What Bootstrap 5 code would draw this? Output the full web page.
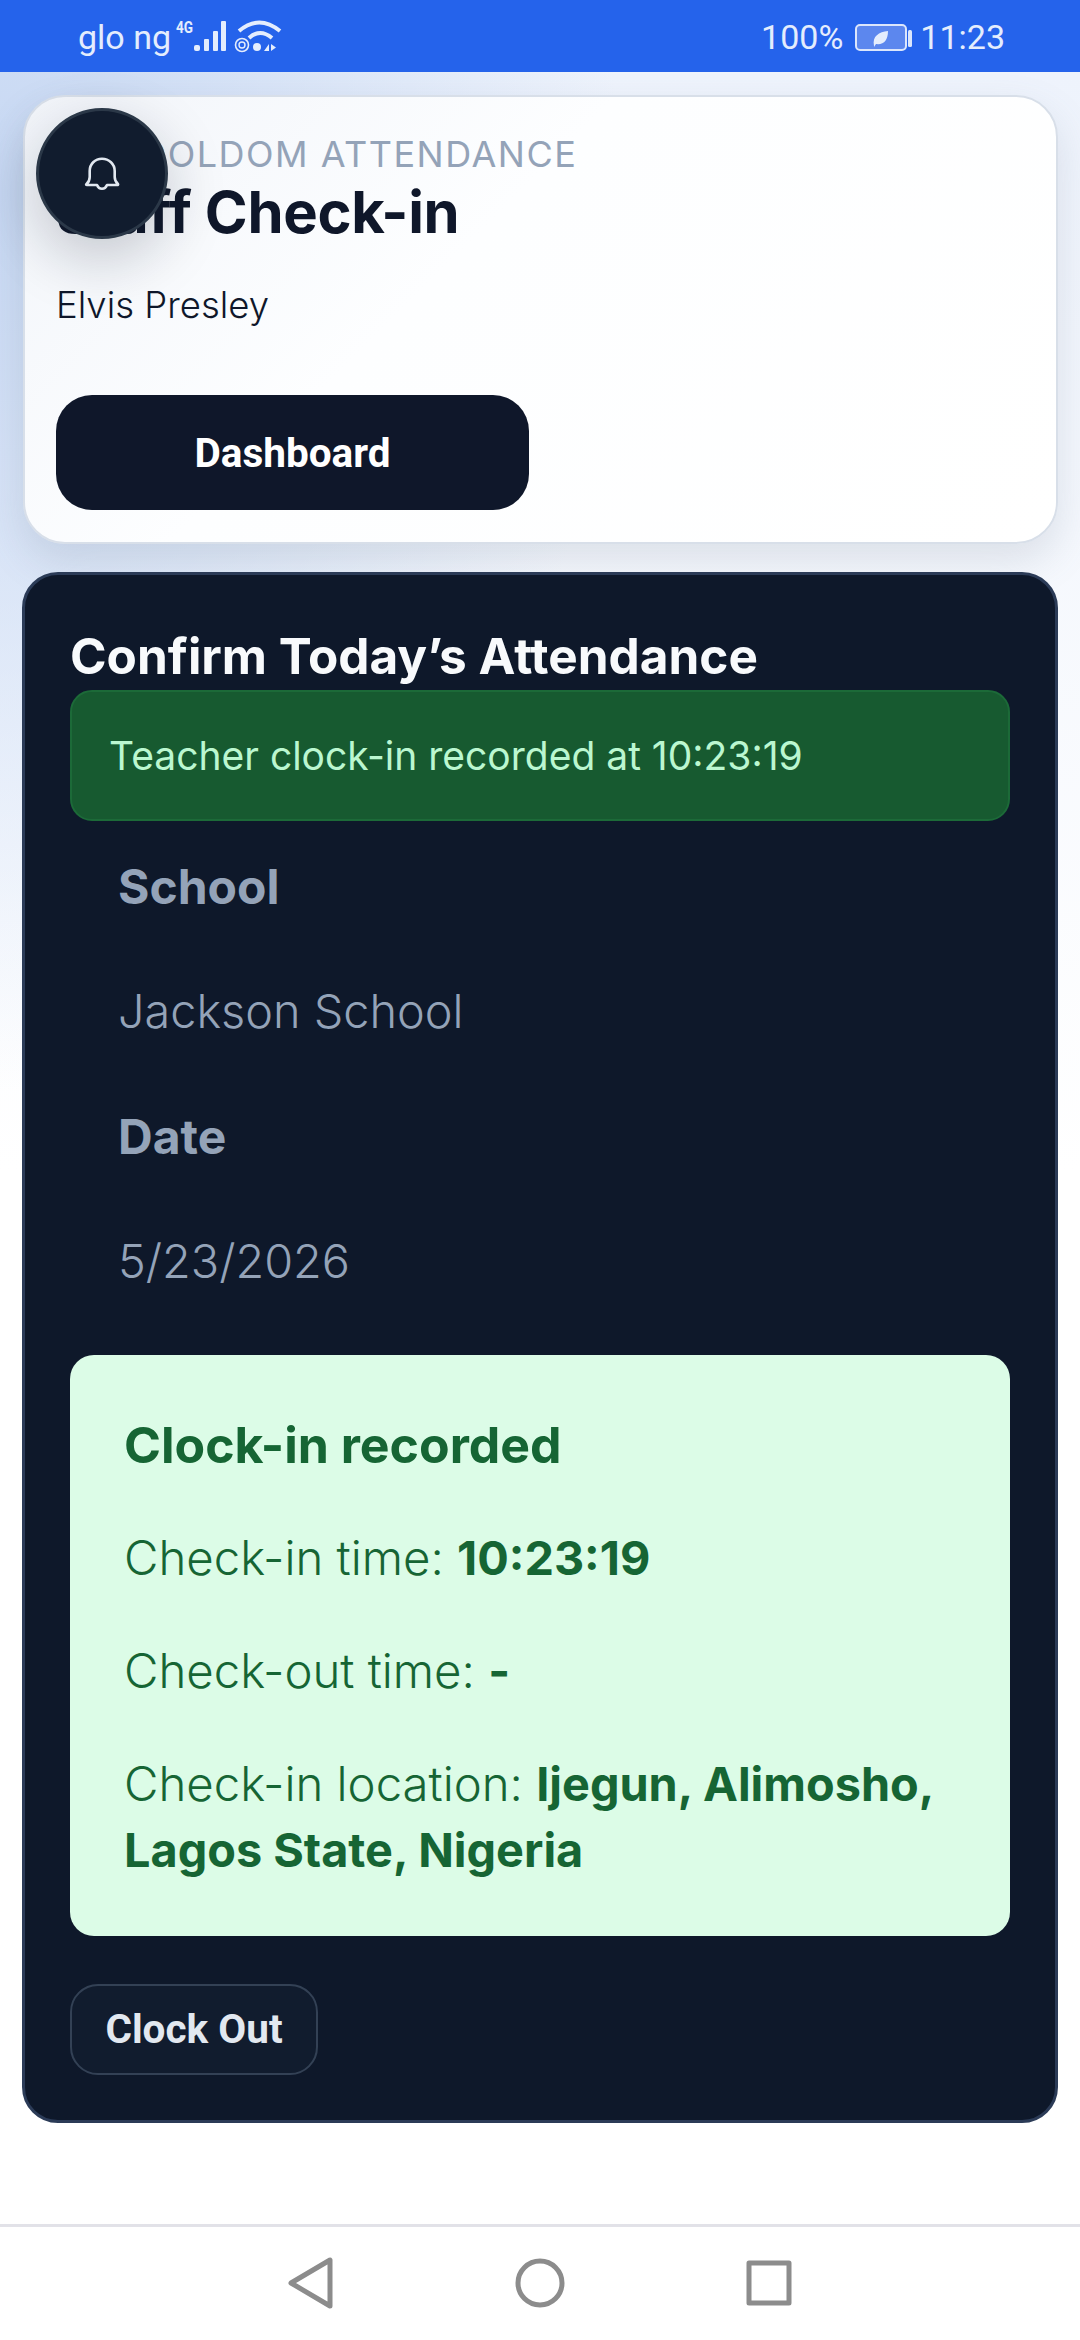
<!DOCTYPE html>
<html lang="en">
<head>
    <meta charset="UTF-8">
    <meta name="viewport" content="width=device-width, initial-scale=1.0">
    <title>Staff Check-in</title>
    <link href="https://cdn.jsdelivr.net/npm/bootstrap@5.3.0/dist/css/bootstrap.min.css" rel="stylesheet">
    <style>
        body {
            width: 1080px;
            height: 2340px;
            overflow: hidden;
            font-family: Inter, "Noto Sans", sans-serif;
            background: #fff;
        }

        #statusBar {
            height: 72px;
            padding: 3px 75px 0 78px;
            background: #2563eb;
            color: #e4edfd;
            font-family: Roboto, sans-serif;
            font-size: 34px;
        }

        #signalIcon { margin-left: 2px; }
        #batteryIcon { margin-left: 12px; }
        #clockText { margin-left: 7px; }

        #pageArea {
            height: 2152px;
            padding: 23px 22px 0;
            background:
                radial-gradient(ellipse 620px 900px at 0 120px, #c7d8f3 0%, rgba(199, 216, 243, 0) 100%),
                linear-gradient(180deg, #eef3fc 0, #ffffff 1100px);
        }

        #headCard {
            height: 449px;
            margin: 0 0 28px 1px;
            padding: 35px 31px;
            border: 2px solid #d8dfe9;
            border-radius: 42px;
            background: linear-gradient(135deg, #f2f5fa 0, #fdfeff 40%, #ffffff 100%);
            box-shadow: 0 18px 40px rgba(100, 116, 139, .18);
        }

        #eyebrow {
            font-size: 36px;
            line-height: 44px;
            letter-spacing: 1.5px;
            color: #94a3b8;
            padding-left: 2px;
        }

        #pageTitle {
            margin: 0;
            font-size: 58px;
            line-height: 72px;
            font-weight: 650;
            letter-spacing: -.3px;
            color: #0f172a;
        }

        #staffName {
            margin: 35px 0 68px;
            font-size: 36.5px;
            line-height: 44px;
            font-weight: 300;
            color: #0f172a;
        }

        #dashboardBtn {
            width: 473px;
            height: 115px;
            padding: 2px 0 0;
            border: 0;
            border-radius: 36px;
            background: #0f172a;
            color: #fff;
            font-family: Roboto, sans-serif;
            font-weight: 700;
            font-size: 40.5px;
        }

        #bellBtn {
            position: absolute;
            left: 36px;
            top: 108px;
            width: 132px;
            height: 131px;
            border: 3px solid #2b3848;
            border-radius: 50%;
            background: #111c2e;
            box-shadow: 0 20px 60px rgba(15, 23, 42, .22);
        }

        #attendanceCard {
            height: 1551px;
            padding: 47px 45px;
            border: 3px solid #2b3b57;
            border-radius: 36px;
            background: #0e182a;
        }

        #attendanceTitle {
            margin: 0;
            font-size: 49.5px;
            line-height: 68px;
            font-weight: 650;
            color: #f8fafc;
        }

        #clockNotice {
            height: 131px;
            margin-bottom: 3px;
            padding: 2px 37px 0;
            border: 2px solid #1c6a38;
            border-radius: 22px;
            background: #175a30;
            color: #bbf7d0;
            font-size: 39px;
        }

        .infoLabel,
        .infoValue {
            height: 125px;
            padding-left: 48px;
            color: #94a3b8;
        }

        .infoLabel { font-size: 48px; font-weight: 650; }
        .infoValue { font-size: 46.8px; font-weight: 300; }

        #recordBox {
            height: 581px;
            margin-top: 31px;
            padding: 54px 54px 0;
            border-radius: 24px;
            background: #dcfce7;
            color: #166534;
            font-size: 47.3px;
            line-height: 66px;
            font-weight: 300;
        }

        #recordTitle {
            margin: 0 0 44px;
            font-size: 50px;
            line-height: 72px;
            font-weight: 650;
        }

        #recordBox p { margin: 0 0 47px; }
        #recordBox b { font-size: 46.8px; font-weight: 650; }

        #clockOutBtn {
            width: 248px;
            height: 91px;
            margin-top: 48px;
            padding: 0;
            border: 2px solid #334155;
            border-radius: 28px;
            background: #111c2e;
            color: #e2e8f0;
            font-family: Roboto, sans-serif;
            font-weight: 700;
            font-size: 40.5px;
        }

        #navBar {
            height: 116px;
            padding-bottom: 2px;
            border-top: 3px solid #e2e2e8;
            background: #fff;
            gap: 181px;
        }
    </style>
</head>
<body class="position-relative">
    <div id="statusBar" class="d-flex justify-content-between align-items-center">
        <div class="d-flex align-items-center">
            <span>glo ng</span>
            <svg id="signalIcon" width="110" height="44" viewBox="172 15 110 44" fill="#e4edfd">
                <text x="175" y="32" font-family="Roboto, sans-serif" font-size="17" font-weight="700" textLength="17" lengthAdjust="spacingAndGlyphs">4G</text>
                <rect x="193" y="44" width="6" height="6" rx="2"/>
                <rect x="203" y="38" width="5" height="12" rx="1"/>
                <rect x="212" y="30" width="5" height="20" rx="1"/>
                <rect x="220" y="20" width="5" height="30" rx="1"/>
                <g fill="none" stroke="#e4edfd">
                    <path d="M238 30 Q258 13 279 30" stroke-width="4"/>
                    <path d="M248 37 Q259 27 271 37" stroke-width="4"/>
                    <circle cx="241" cy="44" r="6.5" stroke-width="1.6"/>
                    <circle cx="241" cy="44" r="3" stroke-width="1.4"/>
                </g>
                <circle cx="256" cy="46" r="4"/>
                <path d="M268 43v7h-5zM270 43v7l5-3.5z"/>
            </svg>
        </div>
        <div class="d-flex align-items-center">
            <span>100%</span>
            <svg id="batteryIcon" width="58" height="30" viewBox="852 21 58 30">
                <rect x="853" y="23" width="50" height="25" rx="4" fill="#5c87ee" stroke="#dbe6fc" stroke-width="2"/>
                <rect x="905" y="28" width="4" height="17" rx="1.5" fill="#dbe6fc"/>
                <path d="M871 44 C869 34 876 30 885 29 C885 38 881 43 873 42 L871 45z" fill="#e4edfd"/>
            </svg>
            <span id="clockText">11:23</span>
        </div>
    </div>

    <div id="pageArea">
        <div id="headCard">
            <div id="eyebrow">SCHOOLDOM ATTENDANCE</div>
            <h1 id="pageTitle">Staff Check-in</h1>
            <p id="staffName">Elvis Presley</p>
            <button id="dashboardBtn" class="btn">Dashboard</button>
        </div>

        <div id="attendanceCard">
            <h2 id="attendanceTitle">Confirm Today’s Attendance</h2>
            <div id="clockNotice" class="d-flex align-items-center">Teacher clock-in recorded at 10:23:19</div>
            <div class="infoLabel d-flex align-items-center">School</div>
            <div class="infoValue d-flex align-items-center">Jackson School</div>
            <div class="infoLabel d-flex align-items-center">Date</div>
            <div class="infoValue d-flex align-items-center">5/23/2026</div>
            <div id="recordBox">
                <h3 id="recordTitle">Clock-in recorded</h3>
                <p>Check-in time: <b>10:23:19</b></p>
                <p>Check-out time: <b>-</b></p>
                <p>Check-in location: <b>Ijegun, Alimosho, Lagos State, Nigeria</b></p>
            </div>
            <button id="clockOutBtn" class="btn">Clock Out</button>
        </div>
    </div>

    <button id="bellBtn" class="btn d-flex align-items-center justify-content-center p-0" aria-label="Notifications">
        <svg width="36" height="36" viewBox="0 0 36 36" fill="none" stroke="#e2e8f0" stroke-width="2.6" stroke-linejoin="round">
            <path d="M2.5 28C5 26 5.7 24 5.7 21V15C5.7 8 11 2.7 18 2.7C25 2.7 30.7 8 30.7 15V21C30.7 24 31.5 26 34 28Q34.5 29 33 29H23C21 34 15 34 13 29H3Q1.5 29 2.5 28Z"/>
        </svg>
    </button>

    <div id="navBar" class="d-flex justify-content-center align-items-center">
        <svg width="46" height="52" viewBox="0 0 46 52" fill="none" stroke="#8c8c8c" stroke-width="5" stroke-linejoin="round"><path d="M42 3V49L3 26Z"/></svg>
        <svg width="50" height="50" viewBox="0 0 50 50" fill="none" stroke="#8c8c8c" stroke-width="5"><circle cx="25" cy="25" r="22"/></svg>
        <svg width="46" height="46" viewBox="0 0 46 46" fill="none" stroke="#8c8c8c" stroke-width="5" stroke-linejoin="round"><rect x="3" y="3" width="40" height="40"/></svg>
    </div>
</body>
</html>
